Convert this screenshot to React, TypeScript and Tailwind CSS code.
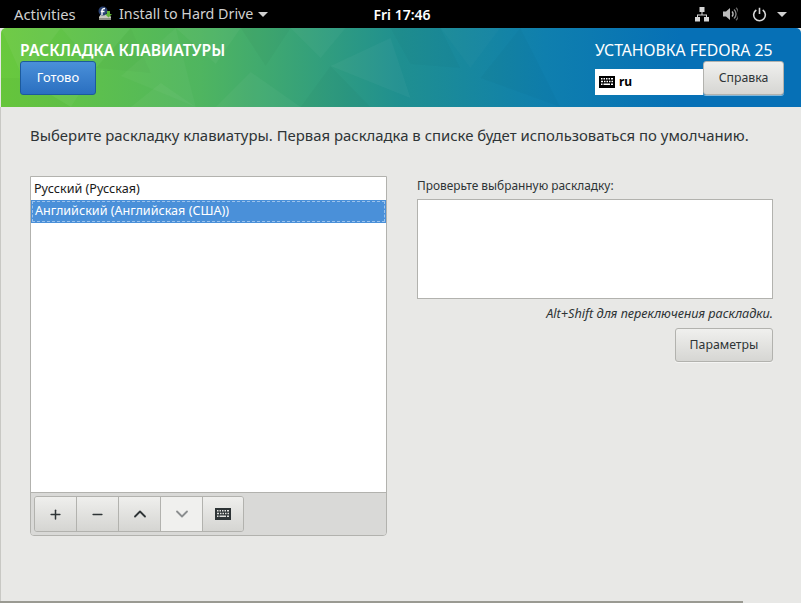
import { Plus, Minus, ChevronUp, ChevronDown } from "lucide-react";

const font = { fontFamily: '"Noto Sans", "Open Sans", sans-serif' };

// Small keyboard glyph used in the layout box and the toolbar
const KeyboardIcon = ({ className }: { className?: string }) => (
  <svg viewBox="0 0 16 12" className={className} fill="currentColor">
    <path
      fillRule="evenodd"
      d="M0 0h16v12H0zM2 2v1.500h1.500V2zm2.500 0v1.500H6V2zM7 2v1.500h1.500V2zm2.500 0v1.500H11V2zM12 2v1.500h2V2zM2 4.750v1.500h2v-1.500zm3 0v1.500h1.500v-1.500zm2.500 0v1.500H9v-1.500zm2.500 0v1.500h1.500v-1.500zm2.500 0v1.500H14v-1.500zM2 7.500V9h1.500V7.500zm2.500 0V9H11V7.500zm7.500 0V9h2V7.500z"
    />
  </svg>
);

// Faint low-poly texture over the header gradient
const HeaderTexture = () => (
  <svg viewBox="0 0 801 79" preserveAspectRatio="none" className="absolute inset-0 w-full h-full">
    <g fill="#ffffff">
      <polygon points="0,0 60,0 22,50" opacity="0.05" />
      <polygon points="60,0 130,0 95,40" opacity="0.035" />
      <polygon points="22,50 95,40 70,79" opacity="0.04" />
      <polygon points="120,48 175,0 195,79" opacity="0.03" />
      <polygon points="175,0 240,0 215,36" opacity="0.04" />
      <polygon points="215,79 250,44 300,79" opacity="0.035" />
      <polygon points="290,0 345,0 320,30" opacity="0.03" />
      <polygon points="330,38 390,10 410,70" opacity="0.035" />
      <polygon points="440,0 500,0 470,40" opacity="0.02" />
      <polygon points="130,79 160,55 195,79" opacity="0.04" />
    </g>
    <g fill="#000000">
      <polygon points="0,50 22,50 70,79 0,79" opacity="0.02" />
      <polygon points="240,0 290,0 265,38" opacity="0.025" />
      <polygon points="300,79 330,38 370,79" opacity="0.025" />
      <polygon points="390,0 440,0 460,40 410,36" opacity="0.02" />
      <polygon points="480,50 520,0 560,79" opacity="0.02" />
      <polygon points="95,40 130,0 150,45" opacity="0.02" />
    </g>
  </svg>
);

const InstallIcon = () => (
  <svg viewBox="0 0 16 16" className="w-[16px] h-[16px]">
    <path d="M2 11l2-3h8l2 3v3H2z" fill="#c9c9c0" />
    <rect x="2" y="12" width="12" height="2" fill="#8f8f86" />
    <circle cx="6" cy="5" r="4.500" fill="#294172" />
    <path d="M5 9V4.500C5 3 6 2.500 8 2.500M3.800 5.500H7.500" stroke="#fff" strokeWidth="1.300" fill="none" />
    <path d="M10 5h3v3h2l-3.500 3.500L8 8h2z" fill="#5fb336" />
  </svg>
);

const NetworkIcon = () => (
  <svg viewBox="0 0 16 16" className="w-[16px] h-[16px]" fill="#d6d6d6">
    <rect x="5.500" y="1" width="5" height="5" />
    <rect x="1" y="11" width="5" height="4.500" />
    <rect x="10" y="11" width="5" height="4.500" />
    <path d="M7.500 6h1v2.500H13V11h-1V9.500H4V11H3V8.500h4.500z" />
  </svg>
);

const VolumeIcon = () => (
  <svg viewBox="0 0 16 16" className="w-[16px] h-[16px]" fill="none">
    <path d="M1 5.500h3L8 2v12l-4-3.500H1z" fill="#bdbdbd" />
    <path d="M10 5.500a3.500 3.500 0 0 1 0 5" stroke="#bdbdbd" strokeWidth="1.400" />
    <path d="M12 3.500a6 6 0 0 1 0 9" stroke="#8a8a8a" strokeWidth="1.400" />
    <path d="M14 1.800a8.500 8.500 0 0 1 0 12.400" stroke="#666" strokeWidth="1.200" />
  </svg>
);

const PowerIcon = () => (
  <svg viewBox="0 0 16 16" className="w-[15px] h-[15px]" fill="none" stroke="#d6d6d6" strokeWidth="1.700">
    <path d="M4.600 3.200a6.200 6.200 0 1 0 6.800 0" />
    <path d="M8 0.800v6.700" />
  </svg>
);

const Caret = ({ className }: { className: string }) => (
  <span className={`w-0 h-0 border-x-[5px] border-x-transparent border-t-[5px] ${className}`} />
);

const grayBtn =
  "border border-[#b2b2ae] rounded-[3px] bg-gradient-to-b from-[#f0f0ee] to-[#d6d6d3] text-[#2e3436] text-[12.300px] shadow-[0_1px_0_#ffffff80]";

const toolBtn =
  "w-[42px] shrink-0 h-full flex items-center justify-center bg-gradient-to-b from-[#efefed] to-[#d5d5d2] text-[#2e3436] border-r border-[#b2b2ae]";

export default function App() {
  return (
    <div className="w-[801px] h-[603px] overflow-hidden bg-[#e8e8e6] flex flex-col" style={font}>
      {/* GNOME top bar */}
      <div className="h-[28px] bg-black flex items-center text-[14.300px] text-[#d0d0d0] shrink-0">
        <div className="flex-1 flex items-center pl-[14px]">
          <span className="w-[62px] text-[14.800px]">Activities</span>
          <span className="ml-[21px] flex items-center">
            <InstallIcon />
            <span className="ml-[6px]">Install to Hard Drive</span>
            <Caret className="ml-[5px] border-t-[#d0d0d0]" />
          </span>
        </div>
        <span className="ml-[3px] text-white font-semibold text-[14px]">Fri 17:46</span>
        <div className="flex-1 flex items-center justify-end pr-[14px]">
          <NetworkIcon />
          <span className="ml-[12px]"><VolumeIcon /></span>
          <span className="ml-[14px]"><PowerIcon /></span>
          <Caret className="ml-[10px] border-t-[#d0d0d0]" />
        </div>
      </div>

      {/* Spoke header */}
      <div className="relative h-[79px] shrink-0 rounded-t-[5px] ml-px overflow-hidden bg-[linear-gradient(90deg,#69c93d_0%,#4fb560_25%,#1f8f90_50%,#0f7fae_68%,#0670b6_85%,#0670b6_100%)]">
        <HeaderTexture />
        <div className="relative h-full flex justify-between pl-[19px] pr-[17px] pt-[13px]">
          <div className="flex flex-col items-start">
            <h1 className="text-[15.700px] leading-[18px] font-semibold text-white whitespace-nowrap">РАСКЛАДКА КЛАВИАТУРЫ</h1>
            <button className="mt-[2px] w-[76px] h-[34px] rounded-[3px] border border-[#1c5a9c] bg-gradient-to-b from-[#4a90d9] to-[#2a6fc0] text-white text-[13px]">
              Готово
            </button>
          </div>
          <div className="flex flex-col items-start">
            <div className="text-[15.750px] leading-[18px] text-white whitespace-nowrap">УСТАНОВКА FEDORA 25</div>
            <div className="mt-[2px] flex items-end">
              <div className="w-[108px] h-[26px] bg-white flex items-center pl-[4px] text-black">
                <KeyboardIcon className="w-[16px] h-[12px]" />
                <span className="ml-[4px] text-[12px] font-bold">ru</span>
              </div>
              <button className={`w-[81px] h-[34px] ${grayBtn}`}>Справка</button>
            </div>
          </div>
        </div>
      </div>

      {/* Spoke content */}
      <div className="flex-1 flex flex-col pl-[30px] pr-[28px] border-l border-[#c8c8c4]">
        <p className="mt-[18px] text-[14.900px] leading-[20px] text-[#2e3436] -ml-px whitespace-nowrap">
          Выберите раскладку клавиатуры. Первая раскладка в списке будет использоваться по умолчанию.
        </p>

        <div className="mt-[31px] flex -ml-px">
          {/* Layout list */}
          <div className="w-[357px] h-[360px] border border-[#b2b2ae] rounded-b-[4px] flex flex-col overflow-hidden">
            <div className="flex-1 bg-white pt-px text-[12.600px]">
              <div className="h-[22px] flex items-center pl-[3px] text-[#1a1a1a]">Русский (Русская)</div>
              <div className="h-[23px] p-px bg-[#4a90d9]">
                <div className="h-full flex items-center pl-[2px] border border-dashed border-[#9cc3ec] text-white">
                  Английский (Английская (США))
                </div>
              </div>
            </div>
            <div className="h-[43px] shrink-0 bg-[#d9d9d7] border-t border-[#b2b2ae] px-[3px] pt-[3px]">
              <div className="w-[210px] h-[36px] flex rounded-[3px] border border-[#b2b2ae] overflow-hidden">
                <div className={toolBtn}><Plus size={15} strokeWidth={2.4} /></div>
                <div className={toolBtn}><Minus size={15} strokeWidth={2.4} /></div>
                <div className={toolBtn}><ChevronUp size={20} strokeWidth={2.2} /></div>
                <div className="w-[42px] shrink-0 h-full flex items-center justify-center bg-[#f0f0ee] text-[#8b8e8f] border-r border-[#b2b2ae]">
                  <ChevronDown size={20} strokeWidth={2.2} />
                </div>
                <div className="flex-1 h-full flex items-center justify-center bg-gradient-to-b from-[#efefed] to-[#d5d5d2] text-[#2e3436]">
                  <KeyboardIcon className="w-[16px] h-[12px]" />
                </div>
              </div>
            </div>
          </div>

          {/* Test area */}
          <div className="ml-[30px] w-[356px] flex flex-col">
            <label className="mt-px text-[11.900px] leading-[16px] text-[#2e3436]">Проверьте выбранную раскладку:</label>
            <div className="mt-[6px] h-[100px] bg-white border border-[#b2b2ae]" />
            <p className="mt-[6px] text-[12.700px] leading-[16px] italic text-[#2e3436] text-right whitespace-nowrap">
              Alt+Shift для переключения раскладки.
            </p>
            <button className={`mt-[7px] self-end w-[98px] h-[34px] ${grayBtn}`}>Параметры</button>
          </div>
        </div>

        <div className="flex-1" />
      </div>

      {/* Window bottom edge */}
      <div className="h-[2px] w-[743px] bg-[#9a9a92] shrink-0" />
    </div>
  );
}
